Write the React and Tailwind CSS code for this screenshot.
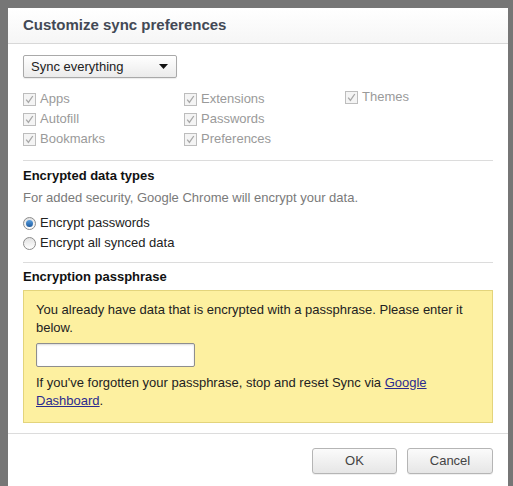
import React from 'react';

const font = "font-['Liberation_Sans',Arial,sans-serif]";

const CheckItem = ({ label }) => (
  <div className="flex h-[20px] items-center">
    <span className="flex h-[13px] w-[13px] items-center justify-center border border-[#bdbdbd] bg-[#f4f4f4]">
      <svg width="9" height="9" viewBox="0 0 9 9">
        <path d="M1.2 4.6 L3.4 7.4 L7.8 1" fill="none" stroke="#a8a8a8" strokeWidth="1.3" />
      </svg>
    </span>
    <span className="ml-[4px] text-[13px] text-[#9a9a9a]">{label}</span>
  </div>
);

const Radio = ({ checked, label }) => (
  <div className="flex h-[20px] items-center">
    <span className="flex h-[13px] w-[13px] items-center justify-center rounded-full border border-[#8c8c8c] bg-gradient-to-b from-[#e2e2e2] to-white">
      {checked && <span className="h-[7px] w-[7px] rounded-full bg-gradient-to-b from-[#5aa0e0] to-[#1d5a9e]" />}
    </span>
    <span className="ml-[4px] text-[13px] text-[#222]">{label}</span>
  </div>
);

const Button = ({ children, w }) => (
  <button className={`h-[26px] ${w} rounded-[3px] border border-[#b5b5b5] bg-gradient-to-b from-[#fbfbfb] to-[#e6e6e6] text-[13px] text-[#444] shadow-[0_1px_0_rgba(0,0,0,0.06)]`}>
    {children}
  </button>
);

export default function App() {
  return (
    <div className={`h-[486px] w-[513px] overflow-hidden bg-[#767676] pl-[8px] pt-[8px] ${font}`}>
      <div className="flex h-[490px] w-[500px] flex-col bg-white">
        <div className="flex h-[36px] items-center border-b border-[#d8d8d8] bg-gradient-to-b from-white to-[#f6f6f6] px-[15px]">
          <h1 className="text-[15px] font-bold text-[#434955]">Customize sync preferences</h1>
        </div>

        <div className="px-[15px] pt-[11px]">
          <div className="flex h-[23px] w-[154px] items-center justify-between rounded-[2px] border border-[#a9a9a9] bg-gradient-to-b from-white to-[#ebebeb] pl-[7px] pr-[8px] text-[13px] text-[#222] shadow-[0_1px_1px_rgba(0,0,0,0.08)]">
            <span>Sync everything</span>
            <svg width="9" height="5" viewBox="0 0 9 5">
              <path d="M0 0 H9 L4.5 5 Z" fill="#111" />
            </svg>
          </div>

          <div className="mt-[11px] grid grid-cols-[161px_161px_1fr]">
            <div>
              <CheckItem label="Apps" />
              <CheckItem label="Autofill" />
              <CheckItem label="Bookmarks" />
            </div>
            <div>
              <CheckItem label="Extensions" />
              <CheckItem label="Passwords" />
              <CheckItem label="Preferences" />
            </div>
            <div className="-mt-[2px]">
              <CheckItem label="Themes" />
            </div>
          </div>

          <div className="mt-[11px] border-t border-[#dcdcdc]" />

          <div className="pt-[6px]">
            <h2 className="h-[17px] text-[13px] font-bold leading-[17px] text-[#111]">Encrypted data types</h2>
            <p className="mt-[5px] h-[17px] text-[13px] leading-[17px] text-[#7a7a7a]">
              For added security, Google Chrome will encrypt your data.
            </p>
            <div className="mt-[7px]">
              <Radio checked label="Encrypt passwords" />
              <Radio label="Encrypt all synced data" />
            </div>
          </div>

          <div className="mt-[9px] border-t border-[#dcdcdc]" />

          <div className="pt-[5px]">
            <h2 className="h-[17px] text-[13px] font-bold leading-[17px] text-[#111]">Encryption passphrase</h2>
            <div className="mt-[5px] border border-[#e3d47c] bg-[#fdf0a0] px-[12px] pb-[12px] pt-[10px] text-[13px] leading-[18px] text-[#222]">
              <p>You already have data that is encrypted with a passphrase. Please enter it below.</p>
              <input
                type="password"
                className="mt-[6px] block h-[24px] w-[159px] rounded-[2px] border border-[#8e8e8e] bg-white shadow-[inset_0_1px_2px_rgba(0,0,0,0.15)] outline-none"
              />
              <p className="mt-[7px]">
                If you've forgotten your passphrase, stop and reset Sync via{' '}
                <a href="#" className="text-[#2b2b8f] underline">Google Dashboard</a>.
              </p>
            </div>
          </div>
        </div>

        <div className="mt-[10px] border-t border-[#dcdcdc]" />

        <div className="flex justify-end gap-[10px] px-[15px] pt-[14px]">
          <Button w="w-[85px]">OK</Button>
          <Button w="w-[86px]">Cancel</Button>
        </div>
      </div>
    </div>
  );
}
